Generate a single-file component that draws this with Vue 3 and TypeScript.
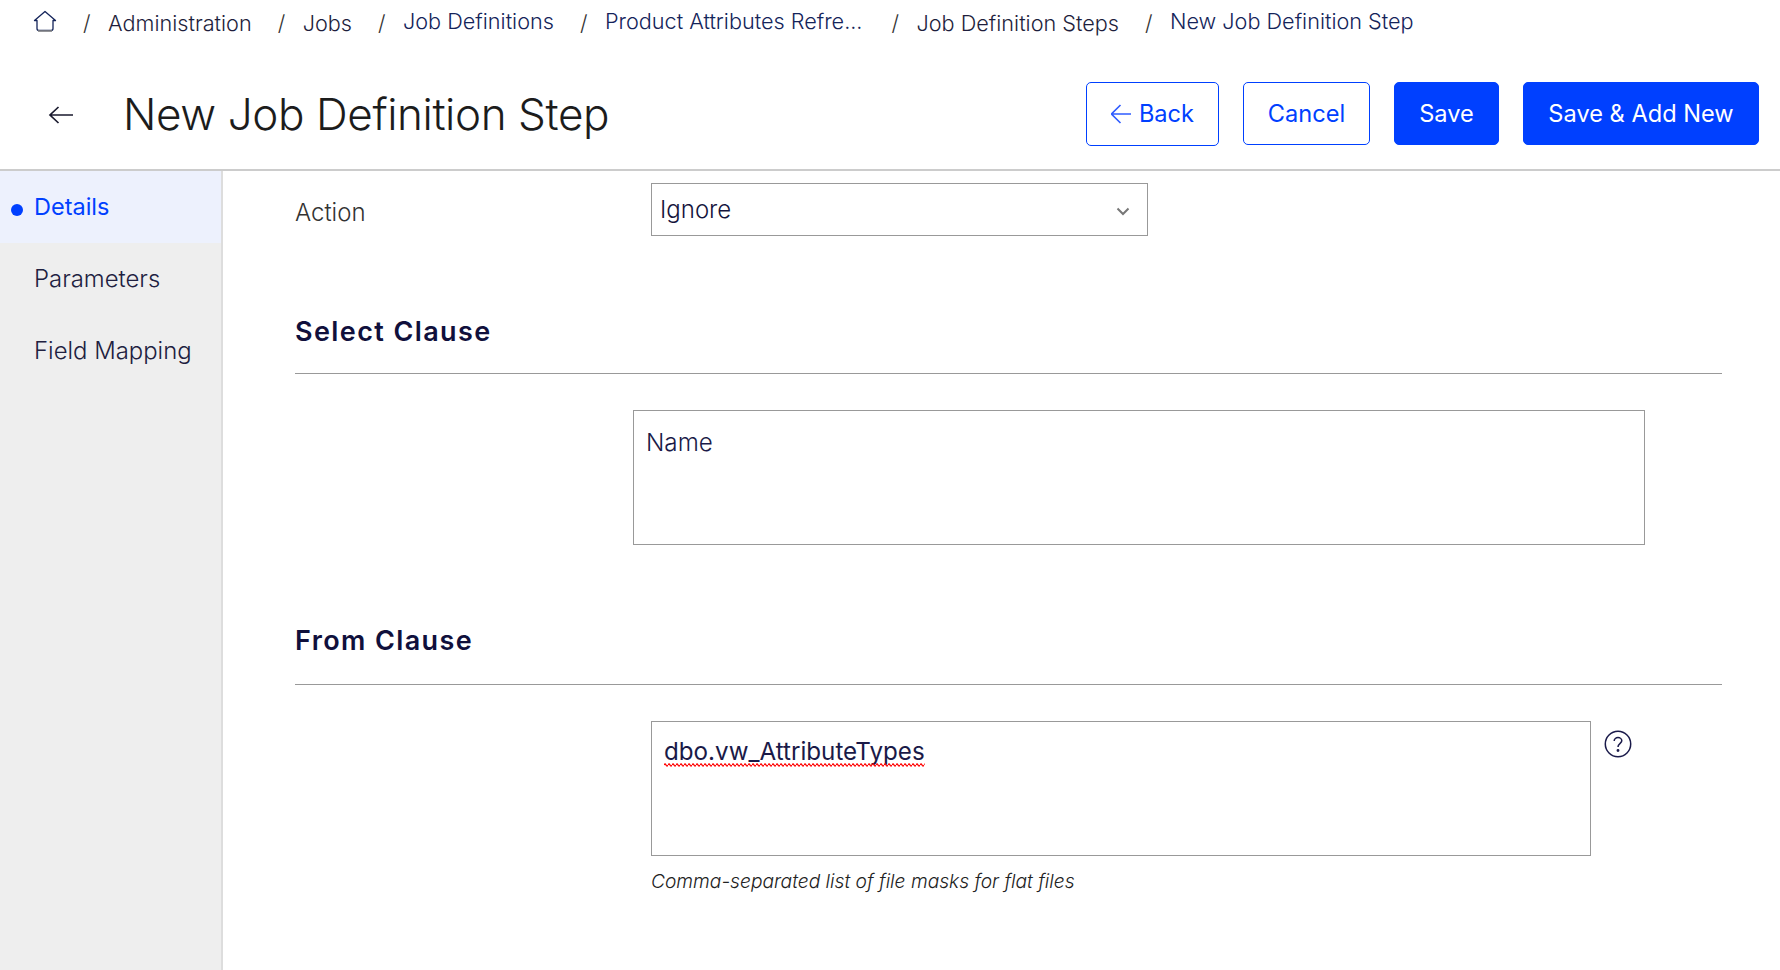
<script setup lang="ts">
interface Crumb { label: string; link: boolean; extra?: boolean }
const crumbs: Crumb[] = [
  { label: 'Administration', link: false },
  { label: 'Jobs', link: false },
  { label: 'Job Definitions', link: true },
  { label: 'Product Attributes Refre...', link: true, extra: true },
  { label: 'Job Definition Steps', link: false },
  { label: 'New Job Definition Step', link: true },
]
const navItems = ['Details', 'Parameters', 'Field Mapping']
</script>

<template>
  <div class="page">
    <nav class="crumbs">
      <svg class="home" width="24" height="24" viewBox="0 0 24 24" fill="none" stroke="#14245a" stroke-width="1.3">
        <path d="M12 1.5 L22.5 10.5 H20 V18.5 Q20 20.5 18 20.5 H6 Q4 20.5 4 18.5 V10.5 H1.5 Z" stroke-linejoin="round" />
        <path d="M5 21 H19" stroke="#888" stroke-width="1.6" />
      </svg>
      <template v-for="c in crumbs" :key="c.label">
        <span class="sep">/</span>
        <span class="crumb" :class="{ up: c.link, extra: c.extra }">{{ c.label }}</span>
      </template>
    </nav>

    <header class="head">
      <svg class="back-arrow" width="26" height="20" viewBox="0 0 26 20" fill="none" stroke="#1a1a2e" stroke-width="1.7">
        <path d="M25 10 H2 M10.5 2 L2 10 L10.5 18" />
      </svg>
      <h1 class="title">New Job Definition Step</h1>
      <div class="actions">
        <button class="btn outline back">
          <svg width="20" height="20" viewBox="1.5 0 20 20" fill="none" stroke="#2f5cff" stroke-width="1.6">
            <path d="M21.5 10 H2 M11 1 L2 10 L11 19" />
          </svg>
          <span>Back</span>
        </button>
        <button class="btn outline cancel">Cancel</button>
        <button class="btn solid save">Save</button>
        <button class="btn solid add">Save &amp; Add New</button>
      </div>
    </header>

    <div class="body">
      <aside class="side">
        <div v-for="(n, i) in navItems" :key="n" class="nav" :class="{ active: i === 0 }">{{ n }}</div>
      </aside>

      <main class="main">
        <div class="action-row">
          <label class="action-label">Action</label>
          <div class="select">
            <span>Ignore</span>
            <svg width="14" height="9" viewBox="0 0 14 9" fill="none" stroke="#777" stroke-width="2">
              <path d="M1.5 1.5 L7 7 L12.5 1.5" />
            </svg>
          </div>
        </div>

        <h2 class="sect first">Select Clause</h2>
        <div class="box name-box">Name</div>

        <h2 class="sect second">From Clause</h2>
        <div class="from-row">
          <div class="box from-box">
            <span class="typo">
              dbo.vw_AttributeTypes
              <svg class="squiggle" width="100%" height="4" aria-hidden="true">
                <defs>
                  <pattern id="wave" width="4" height="4" patternUnits="userSpaceOnUse">
                    <path d="M0 2 Q1 0 2 2 T4 2" fill="none" stroke="#f00" stroke-width="1.3" />
                  </pattern>
                </defs>
                <rect width="100%" height="4" fill="url(#wave)" />
              </svg>
            </span>
          </div>
          <svg class="help" width="28" height="28" viewBox="0 0 28 28" fill="none" stroke="#1a1a4a" stroke-width="1.5">
            <circle cx="14" cy="14" r="12.7" />
            <path d="M10.2 11 C10.2 8.8 12 7.6 14 7.6 C16 7.6 17.8 8.9 17.8 10.8 C17.8 13.2 14 13.6 14 17" />
            <circle cx="14" cy="20.5" r="0.7" />
          </svg>
        </div>
        <p class="hint">Comma-separated list of file masks for flat files</p>
      </main>
    </div>
  </div>
</template>

<style>
html, body { margin: 0; background: #fff; overflow: hidden; }
</style>

<style scoped>
.page {
  width: 1780px;
  height: 970px;
  display: flex;
  flex-direction: column;
  font-family: Inter, "Liberation Sans", sans-serif;
  color: #14143c;
  overflow: hidden;
}
.crumbs {
  height: 46px;
  display: flex;
  align-items: center;
  padding-left: 33px;
  font-size: 21.65px;
  font-weight: 300;
  color: #1e1e3c;
}
.home { margin: -2px 0 0 0; }
.sep { margin: 0 17.5px 0 26px; color: #333; }
.crumb.up { position: relative; top: -2px; color: #14245a; }
.crumb.extra { margin-right: 3px; }
.head {
  height: 125px;
  display: flex;
  align-items: center;
  padding: 14px 21px 0 48px;
  border-bottom: 2px solid #ccc;
  box-sizing: border-box;
}
.back-arrow { margin-right: 49px; }
.title {
  margin: 0 0 2px;
  font-size: 44px;
  font-weight: 300;
  color: #1c1c1c;
  letter-spacing: -0.4px;
}
.actions {
  margin-left: auto;
  display: flex;
  gap: 24px;
  align-items: flex-start;
  margin-top: -2px;
}
.btn {
  height: 63px;
  box-sizing: border-box;
  border-radius: 5px;
  font-family: inherit;
  font-size: 23.6px;
  font-weight: 400;
  display: flex;
  align-items: center;
  justify-content: center;
  gap: 8px;
  padding: 0;
}
.outline { background: #fff; border: 1.5px solid #0040ff; color: #0040ff; }
.solid { background: #0040ff; border: 1px solid #0040ff; color: #fff; }
.back { width: 133px; height: 64px; }
.cancel { width: 127px; }
.save { width: 105px; }
.add { width: 236px; }
.body { flex: 1; display: flex; min-height: 0; }
.side {
  width: 223px;
  box-sizing: border-box;
  background: #eeeeee;
  border-right: 2px solid #ddd;
  flex: none;
}
.nav {
  height: 72px;
  box-sizing: border-box;
  padding: 0 0 2px 34px;
  display: flex;
  align-items: center;
  font-size: 23.9px;
  font-weight: 300;
  color: #202040;
}
.nav.active {
  background: #edf1fd;
  color: #0040ff;
  position: relative;
  font-size: 23.5px;
  font-weight: 400;
}
.nav.active::before {
  content: "";
  position: absolute;
  left: 11px;
  top: 33px;
  width: 12px;
  height: 12px;
  border-radius: 50%;
  background: #0040ff;
}
.main { flex: 1; padding: 12px 58px 0 72px; min-width: 0; }
.action-row { display: flex; align-items: center; height: 53px; }
.action-label { width: 356px; font-size: 24px; font-weight: 300; color: #333; padding-top: 6px; }
.select {
  width: 497px;
  height: 53px;
  box-sizing: border-box;
  border: 1.5px solid #999;
  display: flex;
  align-items: center;
  justify-content: space-between;
  padding: 0 17px 0 8px;
  font-size: 24px;
  font-weight: 300;
  color: #14143c;
}
.select svg { margin-top: 3px; }
.sect {
  margin: 0;
  font-size: 27px;
  font-weight: 600;
  letter-spacing: 1.4px;
  color: #10103c;
  border-bottom: 1.5px solid #999;
  box-sizing: content-box;
}
.sect.first { margin-top: 79px; height: 56px; padding-bottom: 2px; }
.sect.second { margin-top: 79px; height: 58px; padding-bottom: 2px; }
.box {
  box-sizing: border-box;
  border: 1.5px solid #999;
  height: 135px;
  padding: 17px 12px;
  font-size: 24.2px;
  font-weight: 350;
  line-height: 30px;
  color: #1a1a48;
}
.name-box { width: 1012px; margin: 36px 0 0 338px; }
.from-row { display: flex; align-items: flex-start; margin: 36px 0 0 356px; }
.from-box { width: 940px; padding-top: 15px; font-size: 24.2px; font-weight: 370; }
.typo { position: relative; display: inline-block; }
.squiggle { position: absolute; left: 0; bottom: 0; display: block; }
.help { margin: 9px 0 0 13px; }
.hint {
  margin: 13px 0 0 356px;
  font-size: 19.2px;
  font-weight: 300;
  font-style: italic;
  color: #222;
}
</style>
